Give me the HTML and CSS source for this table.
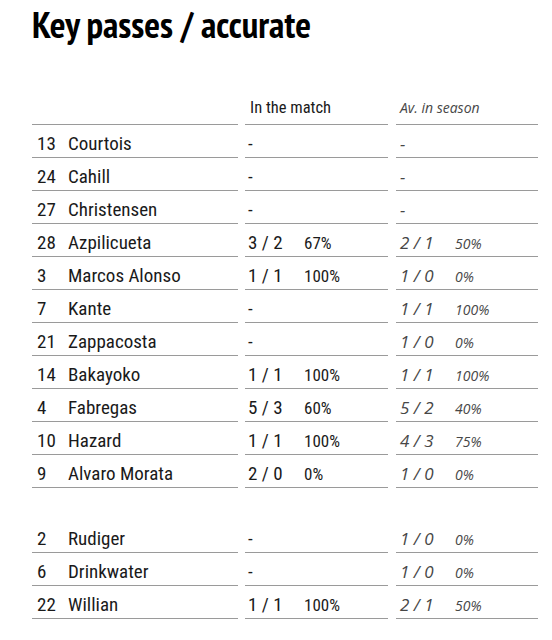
FILE: index.html
```html
<!DOCTYPE html>
<html>
<head>
<meta charset="utf-8">
<link rel="stylesheet" href="styles.css">
</head>
<body>
<div class="page">
  <h1 class="title">Key passes / accurate</h1>
  <div class="table">
    <div class="row head">
      <div class="cell c1"></div>
      <div class="cell c2">In the match</div>
      <div class="cell c3">Av. in season</div>
    </div>
    <div class="row"><div class="cell c1"><span class="no">13</span>Courtois</div><div class="cell c2"><span class="v">-</span></div><div class="cell c3"><span class="av">-</span></div></div>
    <div class="row"><div class="cell c1"><span class="no">24</span>Cahill</div><div class="cell c2"><span class="v">-</span></div><div class="cell c3"><span class="av">-</span></div></div>
    <div class="row"><div class="cell c1"><span class="no">27</span>Christensen</div><div class="cell c2"><span class="v">-</span></div><div class="cell c3"><span class="av">-</span></div></div>
    <div class="row"><div class="cell c1"><span class="no">28</span>Azpilicueta</div><div class="cell c2"><span class="v">3 / 2</span><span class="p">67%</span></div><div class="cell c3"><span class="av">2 / 1</span><span class="ap">50%</span></div></div>
    <div class="row"><div class="cell c1"><span class="no">3</span>Marcos Alonso</div><div class="cell c2"><span class="v">1 / 1</span><span class="p">100%</span></div><div class="cell c3"><span class="av">1 / 0</span><span class="ap">0%</span></div></div>
    <div class="row"><div class="cell c1"><span class="no">7</span>Kante</div><div class="cell c2"><span class="v">-</span></div><div class="cell c3"><span class="av">1 / 1</span><span class="ap">100%</span></div></div>
    <div class="row"><div class="cell c1"><span class="no">21</span>Zappacosta</div><div class="cell c2"><span class="v">-</span></div><div class="cell c3"><span class="av">1 / 0</span><span class="ap">0%</span></div></div>
    <div class="row"><div class="cell c1"><span class="no">14</span>Bakayoko</div><div class="cell c2"><span class="v">1 / 1</span><span class="p">100%</span></div><div class="cell c3"><span class="av">1 / 1</span><span class="ap">100%</span></div></div>
    <div class="row"><div class="cell c1"><span class="no">4</span>Fabregas</div><div class="cell c2"><span class="v">5 / 3</span><span class="p">60%</span></div><div class="cell c3"><span class="av">5 / 2</span><span class="ap">40%</span></div></div>
    <div class="row"><div class="cell c1"><span class="no">10</span>Hazard</div><div class="cell c2"><span class="v">1 / 1</span><span class="p">100%</span></div><div class="cell c3"><span class="av">4 / 3</span><span class="ap">75%</span></div></div>
    <div class="row"><div class="cell c1"><span class="no">9</span>Alvaro Morata</div><div class="cell c2"><span class="v">2 / 0</span><span class="p">0%</span></div><div class="cell c3"><span class="av">1 / 0</span><span class="ap">0%</span></div></div>
    <div class="spacer"></div>
    <div class="row"><div class="cell c1"><span class="no">2</span>Rudiger</div><div class="cell c2"><span class="v">-</span></div><div class="cell c3"><span class="av">1 / 0</span><span class="ap">0%</span></div></div>
    <div class="row"><div class="cell c1"><span class="no">6</span>Drinkwater</div><div class="cell c2"><span class="v">-</span></div><div class="cell c3"><span class="av">1 / 0</span><span class="ap">0%</span></div></div>
    <div class="row"><div class="cell c1"><span class="no">22</span>Willian</div><div class="cell c2"><span class="v">1 / 1</span><span class="p">100%</span></div><div class="cell c3"><span class="av">2 / 1</span><span class="ap">50%</span></div></div>
  </div>
</div>
</body>
</html>
```

FILE: styles.css
```css
html, body {
  margin: 0;
  padding: 0;
  background: #fff;
}
.page {
  padding: 0 0 0 32px;
  font-family: "Roboto Condensed", "Roboto", sans-serif;
  font-stretch: condensed;
  color: #1a1a1a;
}
.title {
  margin: 0;
  padding-top: 4px;
  font-family: "PT Sans Narrow", "Open Sans Condensed", sans-serif;
  font-stretch: normal;
  font-size: 37px;
  line-height: 40px;
  font-weight: bold;
  color: #000;
}
.table {
  margin-top: 54px;
  display: flex;
  flex-direction: column;
  width: 507px;
}
.row {
  display: grid;
  grid-template-columns: 206px 143px 143px;
  column-gap: 7px;
  height: 33px;
}
.row .c3 { margin-left: 1px; }
.cell {
  border-bottom: 1px solid #9a9a9a;
  padding-top: 7px;
  box-sizing: border-box;
  font-size: 19px;
  line-height: 24px;
  white-space: nowrap;
}
.head { height: 27px; }
.head .cell {
  height: 27px;
  padding-top: 0;
  line-height: 20px;
}
.head .c2 {
  padding-left: 5px;
  font-size: 16.5px;
}
.head .c3 {
  padding-left: 4px;
  font-size: 14px;
}
.c1 { padding-left: 5px; }
.no {
  display: inline-block;
  width: 31px;
}
.c2 { padding-left: 3px; }
.v {
  display: inline-block;
  width: 56px;
  font-size: 19px;
}
.p {
  font-size: 17px;
}
.c3 {
  padding-left: 4px;
  font-family: "Open Sans", sans-serif;
  font-stretch: normal;
  font-style: italic;
  font-size: 17px;
  color: #474747;
}
.av {
  display: inline-block;
  width: 55px;
  font-size: 17px;
}
.ap {
  font-size: 14px;
}
.spacer { height: 32px; }
```
